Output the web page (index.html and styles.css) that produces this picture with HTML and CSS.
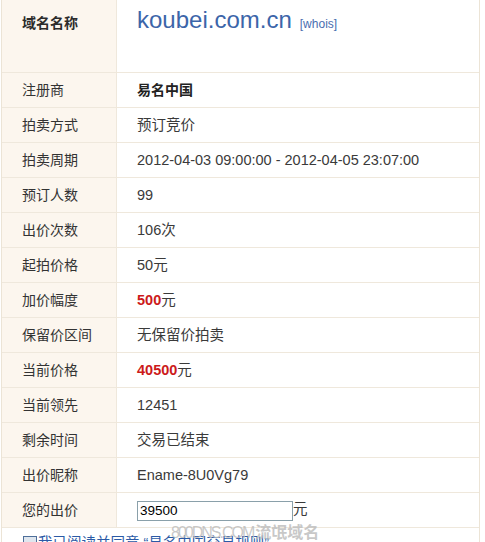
FILE: index.html
```html
<!DOCTYPE html>
<html lang="zh-CN">
<head>
<meta charset="utf-8">
<title>koubei.com.cn</title>
<link rel="stylesheet" href="styles.css">
</head>
<body>
<div class="page">
  <table class="info">
    <tr class="head-row">
      <td class="label"><strong>域名名称</strong></td>
      <td class="value"><a class="domain" href="#">koubei.com.cn</a> <a class="whois" href="#">[whois]</a></td>
    </tr>
    <tr><td class="label">注册商</td><td class="value"><strong>易名中国</strong></td></tr>
    <tr><td class="label">拍卖方式</td><td class="value">预订竞价</td></tr>
    <tr><td class="label">拍卖周期</td><td class="value">2012-04-03 09:00:00 - 2012-04-05 23:07:00</td></tr>
    <tr><td class="label">预订人数</td><td class="value">99</td></tr>
    <tr><td class="label">出价次数</td><td class="value">106次</td></tr>
    <tr><td class="label">起拍价格</td><td class="value">50元</td></tr>
    <tr><td class="label">加价幅度</td><td class="value"><b class="red">500</b>元</td></tr>
    <tr><td class="label">保留价区间</td><td class="value">无保留价拍卖</td></tr>
    <tr><td class="label">当前价格</td><td class="value"><b class="red">40500</b>元</td></tr>
    <tr><td class="label">当前领先</td><td class="value">12451</td></tr>
    <tr><td class="label">剩余时间</td><td class="value">交易已结束</td></tr>
    <tr><td class="label">出价昵称</td><td class="value">Ename-8U0Vg79</td></tr>
    <tr><td class="label">您的出价</td><td class="value"><input class="bid" type="text" value="39500">元</td></tr>
    <tr class="agree-row">
      <td class="agree" colspan="2"><label><span class="box"></span>我已阅读并同意 “易名中国交易规则”</label></td>
    </tr>
  </table>
  <div class="watermark"><span class="wm-latin">800DNS.COM</span>流氓域名</div>
</div>
</body>
</html>
```

FILE: styles.css
```css
html, body {
  margin: 0;
  padding: 0;
  background: #ffffff;
}

body {
  font-family: "Liberation Sans", "Noto Sans CJK SC", sans-serif;
  font-size: 14px;
  color: #333333;
  overflow: hidden;
}

.page {
  position: relative;
  padding-left: 1px;
  width: 479px;
  height: 542px;
  overflow: hidden;
}

.info {
  width: 479px;
  border-collapse: separate;
  border-spacing: 0;
  border-left: 1px solid #ece4d6;
  border-right: 1px solid #ece4d6;
}

.info td {
  height: 34px;
  padding: 0;
  border-bottom: 1px solid #efe8dc;
  line-height: 20px;
  vertical-align: middle;
  white-space: nowrap;
}

.label {
  width: 94px;
  padding-left: 20px !important;
  background: #fcf6ee;
  border-right: 1px solid #efe8dc;
  color: #333333;
}

.value {
  padding-left: 20px !important;
  color: #3a3a3a;
  font-size: 14.5px;
}

.head-row td {
  height: 73px;
  box-sizing: border-box;
  vertical-align: top;
}

.head-row .label {
  padding-top: 13px !important;
}

.head-row .label strong {
  font-weight: bold;
  color: #2b2b2b;
}

.head-row .value {
  padding-top: 6px !important;
  line-height: 28px;
}

.domain {
  font-size: 24px;
  color: #3c65a9;
  text-decoration: none;
}

.whois {
  font-size: 12px;
  color: #4a6eb0;
  text-decoration: none;
  margin-left: 4px;
}

.value strong {
  font-weight: bold;
  color: #222222;
  font-size: 14px;
}

.red {
  color: #cc1a1a;
  font-weight: bold;
}

.bid {
  width: 150px;
  height: 18px;
  margin: 0;
  padding: 0 2px;
  border: 1px solid #8aa0aa;
  font-family: "Liberation Sans", sans-serif;
  font-size: 13.5px;
  color: #000000;
  vertical-align: middle;
  box-sizing: content-box;
}

.agree-row td {
  height: 20px;
  border-bottom: none;
  vertical-align: top;
  padding-top: 5px;
  padding-left: 21px;
  color: #2b5aa6;
  font-size: 14.5px;
}

.agree label {
  display: inline-flex;
  align-items: center;
  gap: 1px;
}

.box {
  display: inline-block;
  width: 12px;
  height: 12px;
  border: 1px solid #4e6f9a;
  background: #dfe6ee;
}

.watermark {
  position: absolute;
  left: 171px;
  top: 520px;
  font-family: "Noto Sans CJK SC", sans-serif;
  font-size: 16px;
  font-weight: bold;
  line-height: 22px;
  color: rgba(190, 190, 190, 0.85);
  white-space: nowrap;
}

.wm-latin {
  font-family: "Liberation Sans", sans-serif;
  font-weight: normal;
  letter-spacing: -2px;
  margin-right: 2px;
}
```
